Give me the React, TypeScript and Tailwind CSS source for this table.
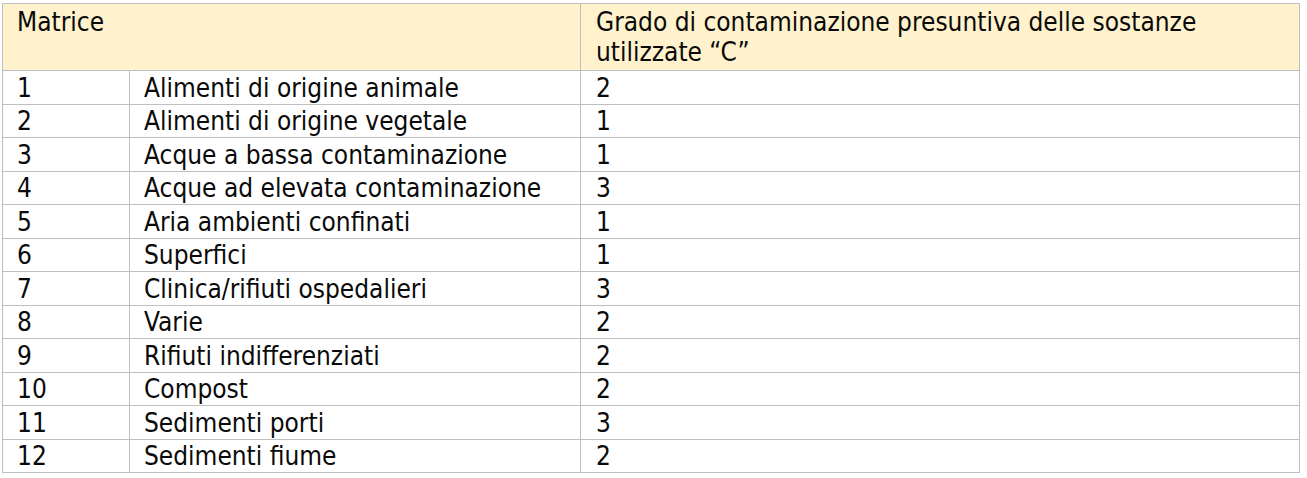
import React from "react";

const rows: [string, string, string][] = [
  ["1", "Alimenti di origine animale", "2"],
  ["2", "Alimenti di origine vegetale", "1"],
  ["3", "Acque a bassa contaminazione", "1"],
  ["4", "Acque ad elevata contaminazione", "3"],
  ["5", "Aria ambienti confinati", "1"],
  ["6", "Superfici", "1"],
  ["7", "Clinica/rifiuti ospedalieri", "3"],
  ["8", "Varie", "2"],
  ["9", "Rifiuti indifferenziati", "2"],
  ["10", "Compost", "2"],
  ["11", "Sedimenti porti", "3"],
  ["12", "Sedimenti fiume", "2"],
];

export default function App() {
  return (
    <div className="w-[1307px] h-[478px] bg-white pt-[3px] pl-[2px]" style={{ fontFamily: '"DejaVu Sans Condensed", "DejaVu Sans", sans-serif' }}>
      <table className="border-collapse w-[1298px] table-fixed text-[26px] leading-[30px] text-[#0a0a0a]">
        <colgroup>
          <col className="w-[127px]" />
          <col className="w-[451px]" />
          <col />
        </colgroup>
        <thead>
          <tr className="bg-[#fff2cc] h-[67px] align-top">
            <th colSpan={2} className="border border-[#bfbfbf] font-normal text-left pl-[14px] pt-[3px]">Matrice</th>
            <th className="border border-[#bfbfbf] font-normal text-left pl-[15px] pr-[40px] pt-[3px]">
              Grado di contaminazione presuntiva delle sostanze utilizzate “C”
            </th>
          </tr>
        </thead>
        <tbody>
          {rows.map((r) => (
            <tr key={r[0]} className="h-[33.5px]">
              <td className="border border-[#bfbfbf] pl-[14px] pt-[1px] pb-0">{r[0]}</td>
              <td className="border border-[#bfbfbf] pl-[14px] pt-[1px] pb-0">{r[1]}</td>
              <td className="border border-[#bfbfbf] pl-[15px] pt-[1px] pb-0">{r[2]}</td>
            </tr>
          ))}
        </tbody>
      </table>
    </div>
  );
}
